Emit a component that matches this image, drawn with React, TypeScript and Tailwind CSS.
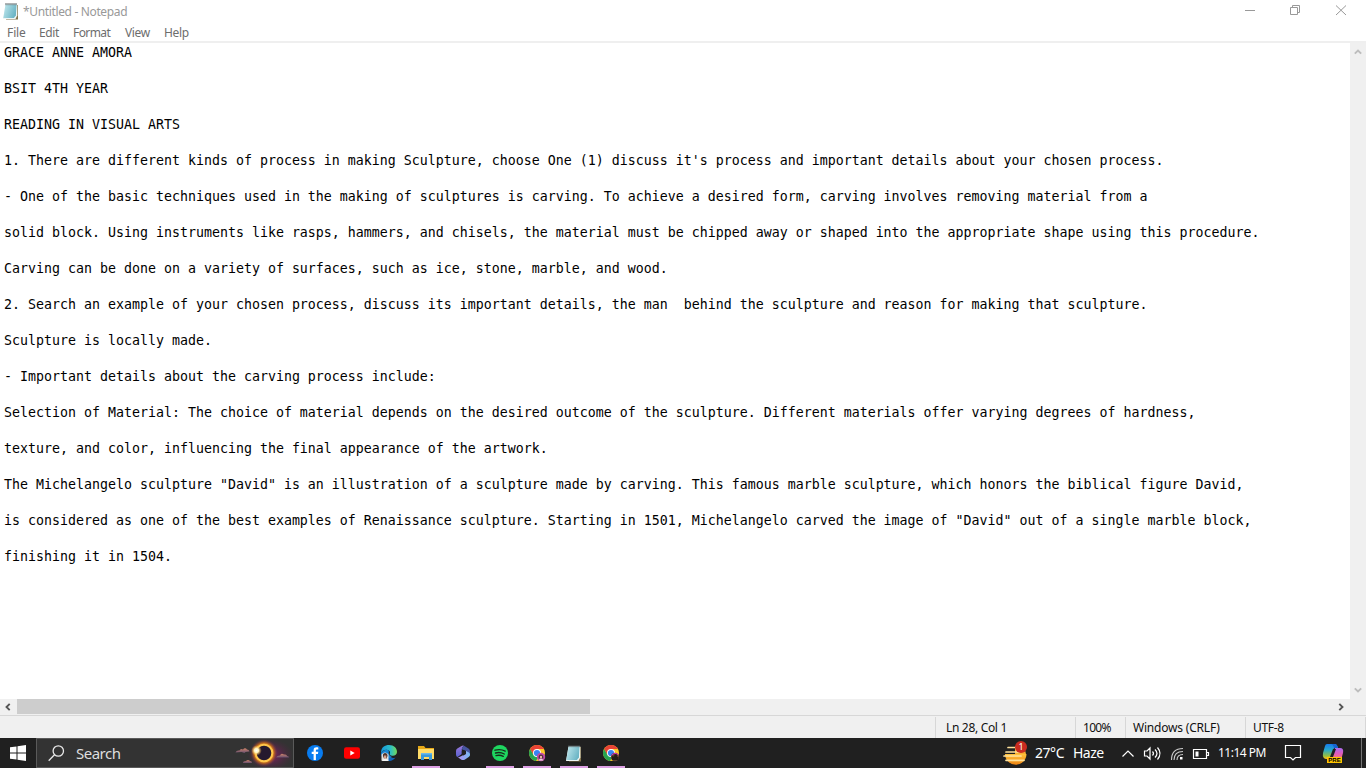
import React from "react";

const lines = [
  "GRACE ANNE AMORA",
  "BSIT 4TH YEAR",
  "READING IN VISUAL ARTS",
  "1. There are different kinds of process in making Sculpture, choose One (1) discuss it's process and important details about your chosen process.",
  "- One of the basic techniques used in the making of sculptures is carving. To achieve a desired form, carving involves removing material from a",
  "solid block. Using instruments like rasps, hammers, and chisels, the material must be chipped away or shaped into the appropriate shape using this procedure.",
  "Carving can be done on a variety of surfaces, such as ice, stone, marble, and wood.",
  "2. Search an example of your chosen process, discuss its important details, the man  behind the sculpture and reason for making that sculpture.",
  "Sculpture is locally made.",
  "- Important details about the carving process include:",
  "Selection of Material: The choice of material depends on the desired outcome of the sculpture. Different materials offer varying degrees of hardness,",
  "texture, and color, influencing the final appearance of the artwork.",
  'The Michelangelo sculpture "David" is an illustration of a sculpture made by carving. This famous marble sculpture, which honors the biblical figure David,',
  'is considered as one of the best examples of Renaissance sculpture. Starting in 1501, Michelangelo carved the image of "David" out of a single marble block,',
  "finishing it in 1504.",
];

function NotepadIcon() {
  return (
    <svg width="18" height="18" viewBox="0 0 18 18" className="shrink-0">
      <defs>
        <linearGradient id="page" x1="0" y1="0" x2="1" y2=".4">
          <stop stopColor="#c3e9ee" />
          <stop offset="1" stopColor="#6db6c6" />
        </linearGradient>
      </defs>
      <path d="M5 3h11v14.500H4z" fill="#84754c" />
      <path d="M3.500 2.500h11.800v11l-1.800 3.500H1z" fill="#eef6f5" />
      <path d="M3.500 2.500h11l-.6 11-2 2.500H1.300z" fill="url(#page)" />
      <path d="M4 1v2.200M6 1v2.200M8 1v2.200M10 1v2.200M12 1v2.200M14 1v2.200" stroke="#4c5557" strokeWidth=".9" />
    </svg>
  );
}

function Chevron({ d, color }: { d: string; color: string }) {
  return (
    <svg width="8" height="8" viewBox="0 0 8 8">
      <path d={d} fill="none" stroke={color} strokeWidth="1.9" />
    </svg>
  );
}

function EclipseArt() {
  return (
    <svg width="58" height="28" viewBox="0 0 58 28" className="shrink-0">
      <defs>
        <radialGradient id="halo">
          <stop offset=".6" stopColor="#ffae20" />
          <stop offset=".75" stopColor="#c4651e" stopOpacity=".75" />
          <stop offset="1" stopColor="#512358" stopOpacity="0" />
        </radialGradient>
        <radialGradient id="glow">
          <stop offset=".3" stopColor="#6e2358" stopOpacity=".85" />
          <stop offset="1" stopColor="#532342" stopOpacity="0" />
        </radialGradient>
        <radialGradient id="flare">
          <stop offset="0" stopColor="#fff" />
          <stop offset=".4" stopColor="#fff4bc" />
          <stop offset="1" stopColor="#ffad23" stopOpacity="0" />
        </radialGradient>
        <linearGradient id="cloud" x1="0" y1="0" x2="0" y2="1">
          <stop stopColor="#cf8368" />
          <stop offset="1" stopColor="#685071" />
        </linearGradient>
      </defs>
      <ellipse cx="36" cy="16" rx="23" ry="16" fill="url(#glow)" />
      <circle cx="30" cy="14" r="14" fill="url(#halo)" />
      <circle cx="30" cy="14" r="8.3" fill="#25192e" stroke="#ffc54b" strokeWidth="2" />
      <g fill="url(#cloud)">
        <path d="M1.500 13.500q1-2.500 4-2 1-2.500 3.500-1 2-2.500 4 0 2 0 2.500 2l-4 .5-1 1-3-1z" />
        <path d="M9 24q0-2 3-2 2-2 4 0 2 0 2 2z" />
        <path d="M42 18.500q1-2 4-2 1-3 4-1 3-.5 3 1.500 2 0 2 1.500z" />
      </g>
      <circle cx="22.5" cy="11.5" r="5.3" fill="url(#flare)" />
    </svg>
  );
}

function Facebook() {
  return (
    <svg width="16" height="16" viewBox="0 0 16 16">
      <circle cx="8" cy="8" r="8" fill="#087cf0" />
      <path d="M8.900 15V9h2l.4-2.300H8.900V5.500c0-.8.5-1.100 1.200-1.100h1.200V2.500C9 2 6.600 2.200 6.600 5.100v1.600H4.700V9h1.900v6z" fill="#fff" />
    </svg>
  );
}

function Youtube() {
  return (
    <svg width="16" height="16" viewBox="0 0 16 16">
      <rect y="2.300" width="16" height="11.400" rx="2.200" fill="#f00" />
      <path d="m6.300 5.500 4.400 2.500-4.400 2.500z" fill="#fff" />
    </svg>
  );
}

function Edge() {
  return (
    <svg width="18" height="18" viewBox="0 0 18 18">
      <defs>
        <linearGradient id="edgeTop">
          <stop stopColor="#1597dc" />
          <stop offset=".6" stopColor="#2dbfc4" />
          <stop offset="1" stopColor="#75d957" />
        </linearGradient>
      </defs>
      <path d="M1 9a8 8 0 0 0 14.500 4.500Q12 15 9 12L8 7z" fill="#1263b7" />
      <path d="M1 9C1 3 5 1 9 1c5 0 8 3 8 7 0 3-3 4.500-6 3.500-2-.5-1-2-1-3.500C9 4.500 3 5 1 9z" fill="url(#edgeTop)" />
      <path d="M1 9c3-4 7-4 8-2-1 2 0 5 3 6-2 1-8 4-11-4z" fill="#1686d4" />
      <path d="M1.500 10.500q3.500-4 7 0v6h-7z" fill="#e4e1df" />
      <path d="M3 12c-1-4 5-4 4.500 0l-1 2.500H4z" fill="#503631" />
      <path d="M4 11.500h2.300v3H4z" fill="#d89f88" />
      <path d="M1.500 17q3.500-5 7.500 0z" fill="#f5f5f3" />
    </svg>
  );
}

function Explorer() {
  return (
    <svg width="18" height="18" viewBox="0 0 18 18">
      <path d="M1 2h6l1.500 2H17v11H1z" fill="#e6a817" />
      <path d="M1 5h16v10H1z" fill="#ffdc68" />
      <path d="M4 9h11v7h-3v-3H7v3H4z" fill="#3999da" />
      <path d="M4 9h11v1.500H4z" fill="#69b8ea" />
    </svg>
  );
}

function Office() {
  return (
    <svg width="16" height="18" viewBox="0 0 16 18">
      <defs>
        <linearGradient id="offLeft" x1="0" y1="0" x2="0" y2="1">
          <stop stopColor="#9a78dc" />
          <stop offset="1" stopColor="#5a62d0" />
        </linearGradient>
        <linearGradient id="offBottom">
          <stop stopColor="#b28bf2" />
          <stop offset="1" stopColor="#78bdf0" />
        </linearGradient>
      </defs>
      <path d="M9 1.800Q6.800 3 6.800 5v5L2.500 13Q1 12.500 1 10.500V7q0-1.700 1.300-2.500L6.500 2Q7.700 1.300 9 1.800z" fill="url(#offLeft)" />
      <path d="m9 1.800 4.500 2.700Q15 5.500 15 7v5l-4-2.500V7L6.800 5.200Q6.800 3 9 1.800z" fill="#46559f" />
      <path d="M2.500 13q2 .5 4-1L11 9.500V7l2.500 1.200Q15 9 15 10.500q0 1.700-1.300 2.500L10 15.500q-2 1.200-4 0z" fill="url(#offBottom)" />
      <path d="M6.800 7 8.500 6l2.500 1.300V10l-2.500 1.500-1.700-1z" fill="#222" />
    </svg>
  );
}

function Spotify() {
  return (
    <svg width="16" height="16" viewBox="0 0 16 16">
      <circle cx="8" cy="8" r="8" fill="#1ed760" />
      <path d="M3 5.200q5.500-1.600 10.200.9M3.500 8q4.600-1.300 8.800 1M4 10.600q4-1 7.300.8" fill="none" stroke="#172d1c" strokeWidth="1.350" strokeLinecap="round" />
    </svg>
  );
}

function Chrome({ dark = false }: { dark?: boolean }) {
  return (
    <svg width="18" height="18" viewBox="0 0 18 18">
      <circle cx="9" cy="9" r="8" fill="#ffca28" />
      <path d="M2.100 5A8 8 0 0 1 16 5H9l-3.500 6z" fill="#ea4335" />
      <path d="M2.100 5A8 8 0 0 0 8 17l4-7-6.500 1z" fill="#26a451" />
      <circle cx="9" cy="9" r="4" fill="#fff" />
      <circle cx="9" cy="9" r="3.100" fill="#3984f4" />
      <circle cx="13" cy="13" r="4.200" fill={dark ? "#5b4030" : "#c14aa6"} />
      {dark ? (
        <path d="M10 16c-1-4 1-5 2-3 0-4 4-4 3 0 2-1 2 1 1 3z" fill="#241c19" />
      ) : (
        <>
          <path d="M10.700 14.500c-1-5.500 5.500-5.500 4.600 0z" fill="#4a2d38" />
          <circle cx="13" cy="13" r="1.200" fill="#edb6a3" />
          <path d="M10.500 16.500q2.500-4 5 0z" fill="#e8cfdc" />
        </>
      )}
      {dark && <path d="M9.500 11.500q3-4 7-.5" stroke="#db29bd" fill="none" strokeWidth="1" />}
    </svg>
  );
}

function Haze() {
  return (
    <svg width="26" height="24" viewBox="0 0 26 24">
      <defs>
        <linearGradient id="sun" x1="0" x2="0" y1="0" y2="1">
          <stop stopColor="#ffc33b" />
          <stop offset="1" stopColor="#ef8412" />
        </linearGradient>
      </defs>
      <path d="M2 12h21.500a10.700 10.700 0 0 1-21.500 0z" fill="url(#sun)" />
      <path d="M12 4h9l2 8H12z" fill="#f8ae31" />
      <path d="M5 5.500h7M3 10h13M1 14h17M3 18.300h18" stroke="#ffe19a" strokeWidth="1.700" strokeLinecap="round" />
    </svg>
  );
}

function Copilot() {
  return (
    <svg width="22" height="22" viewBox="0 0 22 22">
      <defs>
        <linearGradient id="cpl" x1="0" x2="0" y1="0" y2="1">
          <stop stopColor="#167bec" />
          <stop offset=".4" stopColor="#28a8cb" />
          <stop offset=".8" stopColor="#96bd3e" />
          <stop offset="1" stopColor="#ffc21c" />
        </linearGradient>
        <linearGradient id="cpr" x1="0" x2="0" y1="0" y2="1">
          <stop stopColor="#aa6bf0" />
          <stop offset=".5" stopColor="#e35bb7" />
          <stop offset="1" stopColor="#ff855b" />
        </linearGradient>
      </defs>
      <path d="M5 1h8q2 0 3 4h-4L9 15q-1 1-4 1-5 0-4-6l2-7q.5-2 2-2z" fill="url(#cpl)" />
      <path d="M9 1h4q2 0 3 4h-4q-1-4-3-4z" fill="#1764d1" />
      <path d="M13 5h5q4 0 3 5l-2 7H9z" fill="url(#cpr)" />
      <path d="m11 6-3 8h3l3-8z" fill="#202020" />
    </svg>
  );
}

function TaskButton({ children, open = false }: { children: React.ReactNode; open?: boolean }) {
  return (
    <div className="flex h-[30px] w-[37px] shrink-0 flex-col items-center">
      <div className="flex h-7 items-center pt-0.5">{children}</div>
      {open && <div className="h-0.5 w-7 bg-[#dda0e4]" />}
    </div>
  );
}

export default function App() {
  return (
    <div className="flex h-[768px] w-[1366px] flex-col overflow-hidden bg-white font-['Noto_Sans','Open_Sans',sans-serif] text-xs">
      <header className="flex h-[23px] shrink-0 items-center pl-[2px] text-[#999]">
        <div className="h-5 w-[18px] shrink-0"><NotepadIcon /></div>
        <span className="w-[1223px] shrink-0 pl-[3px] text-[12px] tracking-[-0.35px]">*Untitled - Notepad</span>
        <svg width="123" height="23" viewBox="1243 0 123 23" fill="none" stroke="#999" className="shrink-0">
          <path d="M1245 10.500h10M1290.500 7.500h7v7h-7zM1292.500 7v-1.500h7v7h-2" />
          <path d="m1336 5.500 10 9.500M1346 5.500 1336 15" />
        </svg>
      </header>
      <nav className="flex h-[18px] shrink-0 items-center pt-[2px] pl-[7px] text-[12px] text-[#6d6d6d]">
        <span className="w-8 tracking-[-0.1px]">File</span>
        <span className="w-[34px] tracking-[-0.35px]">Edit</span>
        <span className="w-[52px] tracking-[-0.6px]">Format</span>
        <span className="w-[39px] tracking-[-0.35px]">View</span>
        <span className="tracking-[-0.3px]">Help</span>
      </nav>
      <div className="h-0.5 shrink-0 bg-[#efefef]" />

      <div className="flex h-[656px] shrink-0">
        <main className="w-[1350px] overflow-hidden pt-px pl-1 font-['DejaVu_Sans_Mono',monospace] text-[13.289px] leading-[18px] tracking-[0.010px] text-black">
          {lines.map((line) => (
            <p key={line} className="mb-[18px] h-[18px] whitespace-pre">{line}</p>
          ))}
        </main>
        <aside className="flex w-4 flex-col items-center justify-between bg-[#f0f0f0] pt-[5px] pb-[5px] pr-px">
          <Chevron d="M.8 5.700 4 2.500l3.200 3.200" color="#bdbdbd" />
          <Chevron d="M.8 2.300 4 5.500l3.200-3.200" color="#bdbdbd" />
        </aside>
      </div>

      <div className="flex h-[17px] shrink-0 items-start border-b border-[#d7d7d7] bg-[#f0f0f0]">
        <div className="flex h-[15px] w-[17px] items-center pl-1"><Chevron d="M5.700.8 2.500 4l3.200 3.200" color="#555" /></div>
        <div className="h-[15px] w-[573px] bg-[#cdcdcd]" />
        <div className="flex h-[15px] w-[760px] items-center justify-end pr-[5px]"><Chevron d="M2.300.8 5.500 4 2.300 7.200" color="#555" /></div>
      </div>
      <footer className="flex h-[22px] shrink-0 bg-[#f0f0f0] pt-px text-[12px] leading-[22px] text-[#111]">
        <div className="w-[935px]" />
        <div className="w-[140px] border-l border-[#d7d7d7] pl-[10px] tracking-[-0.32px]">Ln 28, Col 1</div>
        <div className="w-[50px] border-l border-[#d7d7d7] pl-[7px] tracking-[-0.7px]">100%</div>
        <div className="w-[120px] border-l border-[#d7d7d7] pl-[7px] tracking-[-0.2px]">Windows (CRLF)</div>
        <div className="w-[120px] border-l border-[#d7d7d7] pl-[7px] tracking-[-0.3px]">UTF-8</div>
        <div className="border-l border-[#d7d7d7]" />
      </footer>

      <section className="flex h-[30px] shrink-0 bg-[#202020] text-white">
        <div className="flex w-9 items-center pl-[10px]">
          <svg width="16" height="16" viewBox="0 0 16 16" fill="#fff">
            <path d="M0 2.300 6.500 1.400v6.100H0zM7.500 1.200 16 0v7.500H7.500zM0 8.500h6.500v6.100L0 13.700zM7.500 8.500H16V16l-8.500-1.200z" />
          </svg>
        </div>
        <div className="flex w-[258px] items-center overflow-hidden border border-[#5a5a5a] bg-[#333] pl-[11px]">
          <svg width="17" height="17" viewBox="0 0 17 17" fill="none" stroke="#e8e8e8" strokeWidth="1.300" className="shrink-0">
            <circle cx="10.300" cy="6" r="5.200" /><path d="M6.500 9.800.7 15.800" />
          </svg>
          <span className="w-[169px] shrink-0 pl-[11px] text-[15px] tracking-[-0.5px] text-[#dedede]">Search</span>
          <EclipseArt />
        </div>
        <div className="flex w-[709px] pl-[2px]">
          <TaskButton><Facebook /></TaskButton>
          <TaskButton><Youtube /></TaskButton>
          <TaskButton><Edge /></TaskButton>
          <TaskButton open><Explorer /></TaskButton>
          <TaskButton><Office /></TaskButton>
          <TaskButton open><Spotify /></TaskButton>
          <TaskButton open><Chrome /></TaskButton>
          <TaskButton open><NotepadIcon /></TaskButton>
          <TaskButton open><Chrome dark /></TaskButton>
        </div>
        <div className="relative flex w-8 items-center pt-[2px]">
          <Haze />
          <span className="absolute left-[12px] top-[3px] flex h-3 w-3 items-center justify-center rounded-full bg-[#c92b20] text-[9px] leading-3">1</span>
        </div>
        <span className="w-[38px] text-[14px] leading-[30px] tracking-[-0.45px]">27°C</span>
        <span className="w-[48px] text-[14px] leading-[30px] tracking-[-0.5px]">Haze</span>
        <svg width="97" height="30" viewBox="1121 738 97 30" fill="none" stroke="#fff" strokeWidth="1.200" className="shrink-0">
          <path d="m1122.500 756.500 5.500-5.500 5.500 5.500" />
          <path d="M1144.500 751h2.500l3-3v11l-3-3h-2.500zM1152.500 751.500q2 2 0 4M1155 749.500q4 4 0 8M1157.500 747.500q5 6 0 12" />
          <path d="M1171.500 760q0-11.500 11.500-11.500M1174 760q0-8.500 9-8.500M1177 760q0-5.500 6-5.500" stroke="#ccc" strokeWidth="1.100" />
          <path d="M1180 757h2.500v2.500h-2.500z" fill="#fff" stroke="none" />
          <path d="M1193.500 749.500h13v9h-13zM1207 752.500h1.500v3h-1.500" />
          <path d="M1195.500 751.500h3v5h-3z" fill="#fff" stroke="none" />
        </svg>
        <span className="w-[66px] whitespace-nowrap text-[12px] leading-[30px] tracking-[-0.5px]">11:14 PM</span>
        <svg width="18" height="18" viewBox="0 0 18 18" fill="none" stroke="#fff" strokeWidth="1.200" className="mt-[6px] shrink-0">
          <path d="M1.500 1.500h15v12h-5L9 16l-2.500-2.500h-5z" />
        </svg>
        <div className="relative flex w-[59px] pl-[20px] pt-[5px]">
          <Copilot />
          <span className="absolute left-[25px] top-[19px] flex h-[6px] w-[15px] items-center justify-center bg-[#ffc500] font-['Liberation_Sans',sans-serif] text-[6px] font-bold leading-[6px] text-black">PRE</span>
        </div>
        <div className="w-[5px] border-l border-[#747474]" />
      </section>
    </div>
  );
}
